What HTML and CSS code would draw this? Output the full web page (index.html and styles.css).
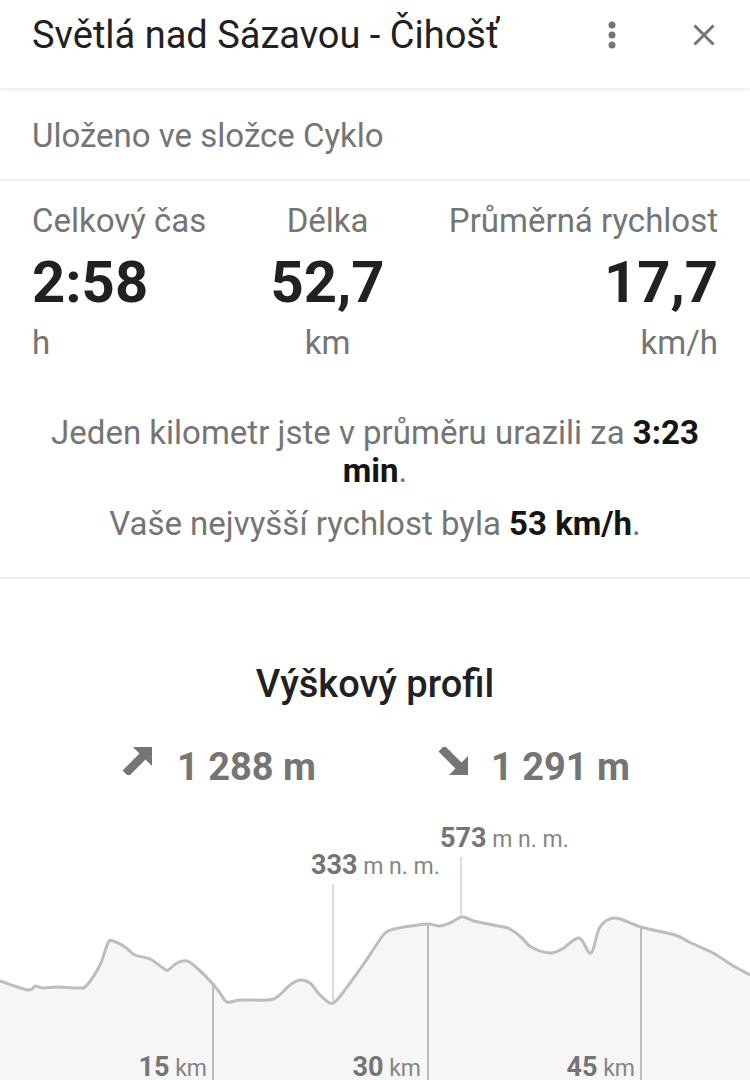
FILE: index.html
```html
<!DOCTYPE html>
<html lang="cs">
<head>
  <meta charset="UTF-8" />
  <meta name="viewport" content="width=device-width, initial-scale=1.0"/>
  <title>Světlá nad Sázavou - Čihošť</title>
  <link rel="stylesheet" href="styles.css">
</head>
<body>

  <header class="topbar">
    <h1 class="title">Světlá nad Sázavou - Čihošť</h1>
    <svg class="icon-dots" viewBox="0 0 8 28">
      <circle cx="4" cy="4" r="3.5" />
      <circle cx="4" cy="14" r="3.5" />
      <circle cx="4" cy="24" r="3.5" />
    </svg>
    <svg class="icon-close" viewBox="0 0 24 24">
      <path d="M2.5 2.5 L21.5 21.5 M21.5 2.5 L2.5 21.5" />
    </svg>
  </header>

  <div class="folder">Uloženo ve složce Cyklo</div>

  <section class="summary">
    <div class="stats">
      <div class="stat stat-left">
        <div class="label">Celkový čas</div>
        <div class="value">2:58</div>
        <div class="unit">h</div>
      </div>
      <div class="stat stat-center">
        <div class="label">Délka</div>
        <div class="value">52,7</div>
        <div class="unit">km</div>
      </div>
      <div class="stat stat-right">
        <div class="label">Průměrná rychlost</div>
        <div class="value">17,7</div>
        <div class="unit">km/h</div>
      </div>
    </div>

    <div class="notes">
      <p class="note">Jeden kilometr jste v průměru urazili za <b>3:23 min</b>.</p>
      <p class="note">Vaše nejvyšší rychlost byla <b>53 km/h</b>.</p>
    </div>
  </section>

  <section class="profile">
    <h2>Výškový profil</h2>

    <div class="climb">
      <div class="climb-item">
        <svg class="arrow" viewBox="0 0 30 28">
          <path d="M11 0 H30 V19 L23.5 12.5 L6.5 29.5 L0.5 23.5 L17.5 6.5 Z" />
        </svg>
        <span>1 288 m</span>
      </div>
      <div class="climb-item climb-down">
        <svg class="arrow" viewBox="0 0 30 28">
          <path d="M11 28 H30 V9 L23.5 15.5 L6.5 -1.5 L0.5 4.5 L17.5 21.5 Z" />
        </svg>
        <span>1 291 m</span>
      </div>
    </div>

    <svg class="chart" viewBox="0 800 750 280" width="750" height="280">
      <path class="area" id="profile-area" d="" />
      <path class="line" id="profile-line" d="" />

      <!-- distance marks -->
      <line class="km-line" x1="213" y1="984" x2="213" y2="1080" />
      <line class="km-line" x1="428" y1="924" x2="428" y2="1080" />
      <line class="km-line" x1="641" y1="927" x2="641" y2="1080" />
      <text class="chart-label" x="207" y="1076" text-anchor="end"><tspan class="num">15</tspan><tspan class="unit-small"> km</tspan></text>
      <text class="chart-label" x="421" y="1076" text-anchor="end"><tspan class="num">30</tspan><tspan class="unit-small"> km</tspan></text>
      <text class="chart-label" x="635" y="1076" text-anchor="end"><tspan class="num">45</tspan><tspan class="unit-small"> km</tspan></text>

      <!-- min / max -->
      <line class="mark-line" x1="333" y1="884" x2="333" y2="1001" />
      <line class="mark-line" x1="461" y1="857" x2="461" y2="916" />
      <text class="chart-label" x="311" y="874"><tspan class="num">333</tspan><tspan class="unit-small"> m n. m.</tspan></text>
      <text class="chart-label" x="440" y="847"><tspan class="num">573</tspan><tspan class="unit-small"> m n. m.</tspan></text>
    </svg>
  </section>

  <script>
    // elevation samples, already in chart coordinates
    const points = [
      [0, 981], [28, 990], [35, 986], [43, 988], [58, 987], [80, 988], [87, 985],
      [100, 965], [108, 943], [113, 941], [125, 947], [135, 955], [150, 959],
      [163, 968], [168, 970], [177, 963], [187, 961], [197, 968], [212, 983],
      [220, 993], [227, 1002], [240, 1000], [267, 1000], [277, 997], [290, 985],
      [300, 980], [310, 983], [320, 995], [330, 1003], [337, 1000], [350, 983],
      [363, 965], [375, 947], [385, 933], [394, 929], [411, 926], [428, 924],
      [440, 926], [450, 923], [462, 917], [474, 921], [488, 924], [498, 926],
      [510, 929], [522, 938], [531, 947], [550, 953], [562, 949], [579, 938],
      [591, 953], [600, 927], [615, 918], [641, 927], [675, 935], [689, 942],
      [713, 953], [732, 965], [750, 975]
    ];

    function smoothPath(p) {
      let d = "M" + p[0][0] + " " + p[0][1];
      for (let i = 0; i < p.length - 1; i++) {
        const p0 = p[i - 1] || p[i];
        const p1 = p[i];
        const p2 = p[i + 1];
        const p3 = p[i + 2] || p2;
        const c1x = p1[0] + (p2[0] - p0[0]) / 6;
        const c1y = p1[1] + (p2[1] - p0[1]) / 6;
        const c2x = p2[0] - (p3[0] - p1[0]) / 6;
        const c2y = p2[1] - (p3[1] - p1[1]) / 6;
        d += " C" + c1x.toFixed(1) + " " + c1y.toFixed(1) + " " +
             c2x.toFixed(1) + " " + c2y.toFixed(1) + " " + p2[0] + " " + p2[1];
      }
      return d;
    }

    const line = smoothPath(points);
    document.getElementById("profile-line").setAttribute("d", line);
    document.getElementById("profile-area").setAttribute("d", line + " L750 1080 L0 1080 Z");
  </script>

</body>
</html>
```

FILE: styles.css
```css
body {
  margin: 0;
  font-family: Roboto, "Noto Sans", sans-serif;
  background: #fff;
  color: #212121;
}
.topbar {
  display: flex;
  align-items: center;
  box-sizing: border-box;
  height: 88px;
  padding: 0 34px 18px 32px;
  box-shadow: 0 2px 4px rgba(0, 0, 0, 0.08);
}
.title {
  flex: 1;
  margin: 0;
  font-size: 38px;
  font-weight: 400;
  line-height: 40px;
  color: #212121;
}
.icon-dots {
  width: 8px;
  height: 28px;
  margin-right: 76px;
  fill: #757575;
}
.icon-close {
  width: 24px;
  height: 24px;
  fill: none;
  stroke: #757575;
  stroke-width: 3;
}
.folder {
  padding: 28px 32px 23px;
  font-size: 33px;
  line-height: 40px;
  color: #757575;
  border-bottom: 2px solid #eeeeee;
}
.summary {
  padding: 20px 32px 34px;
  border-bottom: 2px solid #eeeeee;
}
.stats {
  display: flex;
  justify-content: space-between;
}
.stat-left {
  text-align: left;
}
.stat-center {
  text-align: center;
}
.stat-right {
  text-align: right;
}
.label {
  font-size: 33px;
  line-height: 40px;
  color: #757575;
}
.value {
  margin-top: 6px;
  font-size: 58px;
  font-weight: 700;
  line-height: 70px;
  color: #212121;
}
.unit {
  margin-top: 6px;
  font-size: 33px;
  line-height: 40px;
  color: #757575;
}
.notes {
  margin-top: 51px;
  text-align: center;
}
.note {
  margin: 0;
  font-size: 33px;
  line-height: 38px;
  color: #757575;
}
.note + .note {
  margin-top: 15px;
}
.note b {
  font-weight: 700;
  color: #151515;
}
.profile {
  padding-top: 83px;
}
.profile h2 {
  margin: 0;
  text-align: center;
  font-size: 38px;
  font-weight: 500;
  line-height: 44px;
  color: #212121;
}
.climb {
  display: flex;
  justify-content: center;
  gap: 122px;
  margin-top: 39px;
  padding-left: 2px;
}
.climb-item {
  display: flex;
  align-items: flex-start;
  gap: 25px;
  font-size: 38px;
  font-weight: 700;
  line-height: 44px;
  color: #757575;
}
.climb-down {
  gap: 23px;
}
.arrow {
  width: 30px;
  height: 28px;
  margin-top: 2px;
  fill: #757575;
}
.chart {
  display: block;
  margin-top: 11px;
}
.area {
  fill: #f6f6f6;
}
.line {
  fill: none;
  stroke: #bdbdbd;
  stroke-width: 3;
  stroke-linejoin: round;
}
.km-line {
  stroke: #bdbdbd;
  stroke-width: 2;
}
.mark-line {
  stroke: #d0d0d0;
  stroke-width: 1.5;
}
.chart-label {
  font-family: Roboto, "Noto Sans", sans-serif;
  fill: #757575;
}
.chart-label .num {
  font-size: 27px;
  font-weight: 700;
}
.chart-label .unit-small {
  font-size: 23px;
  font-weight: 400;
  fill: #858585;
}
```
